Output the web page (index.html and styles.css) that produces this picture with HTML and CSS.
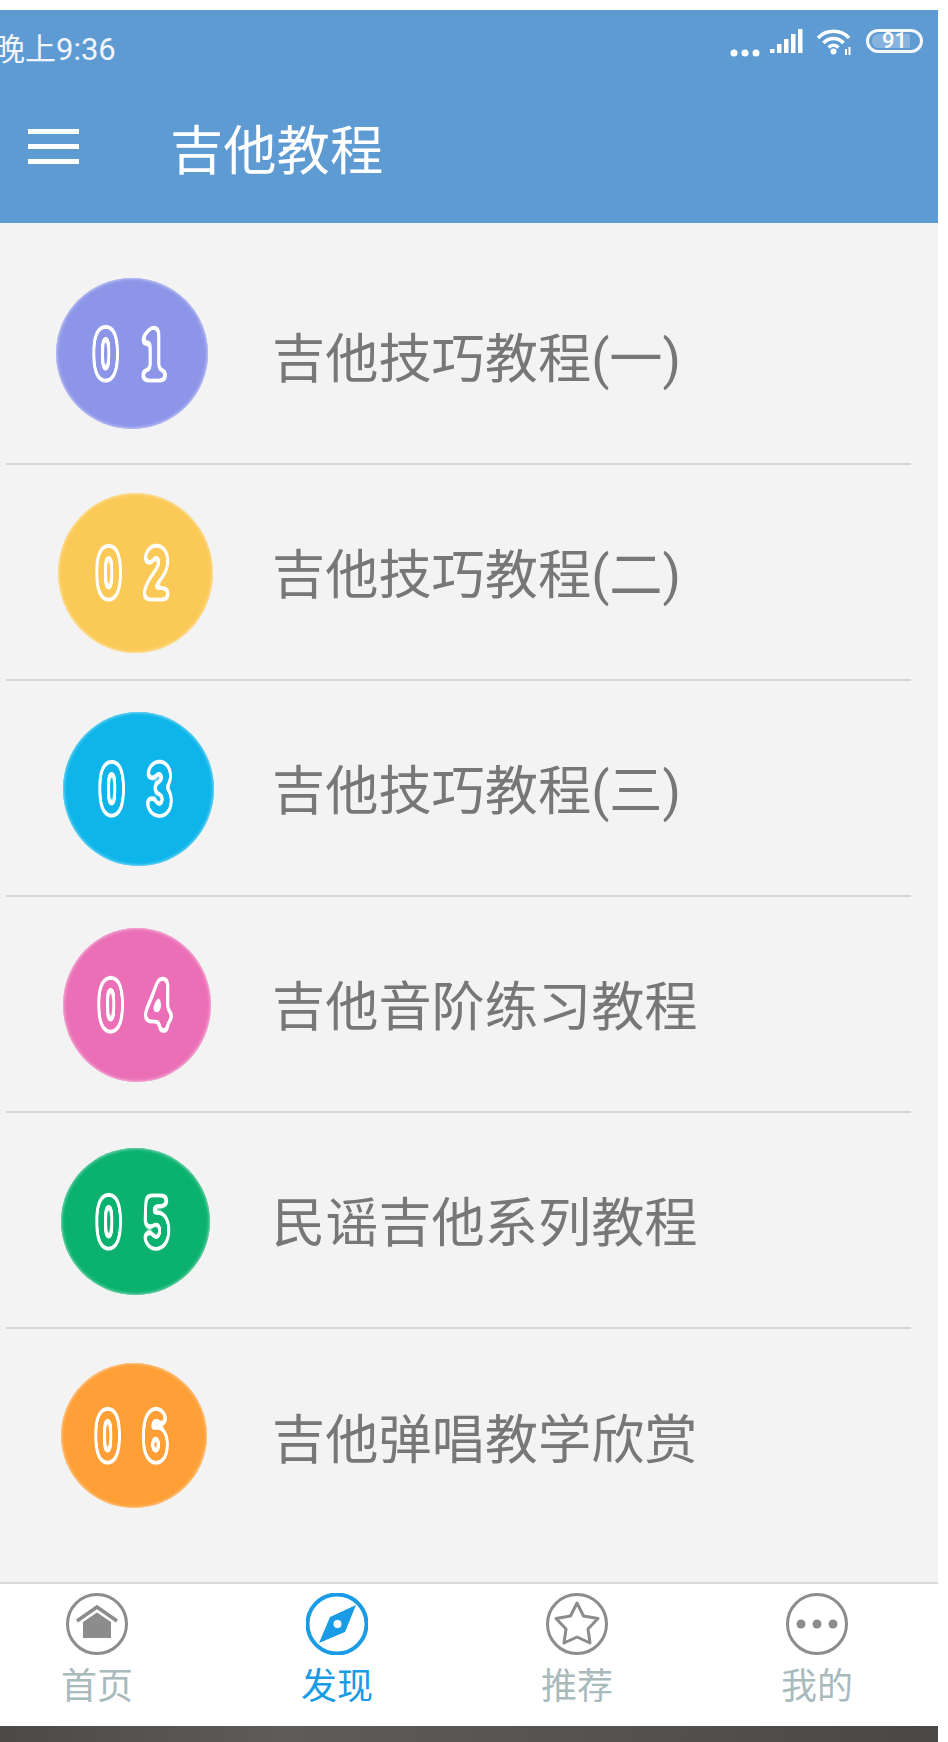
FILE: index.html
```html
<!DOCTYPE html>
<html lang="zh-CN">
<head>
<meta charset="utf-8">
<title>吉他教程</title>
<link rel="stylesheet" href="styles.css">
</head>
<body>
<svg class="defs" width="0" height="0" aria-hidden="true">
  <filter id="bubble" x="-25%" y="-25%" width="150%" height="150%" color-interpolation-filters="sRGB">
    <feGaussianBlur in="SourceGraphic" stdDeviation="4.500 3" result="b"/>
    <feComponentTransfer in="b" result="outer"><feFuncA type="linear" slope="12" intercept="-1.2"/></feComponentTransfer>
    <feComponentTransfer in="b" result="inner"><feFuncA type="linear" slope="12" intercept="-6"/></feComponentTransfer>
    <feComposite in="outer" in2="inner" operator="out" result="ring"/>
    <feGaussianBlur in="ring" stdDeviation="0.5"/>
  </filter>
</svg>
<div class="phone">
  <header class="header">
    <div class="status">
      <span class="clock">晚上9:36</span>
      <div class="status-icons">
        <svg class="ic-dots" viewBox="0 0 30 8"><circle cx="4" cy="4" r="3.500"/><circle cx="15" cy="4" r="3.500"/><circle cx="26" cy="4" r="3.500"/></svg>
        <svg class="ic-signal" viewBox="0 0 33 24"><rect x="0" y="20" width="4.500" height="4"/><rect x="7" y="15" width="4.500" height="9"/><rect x="14" y="10" width="4.500" height="14"/><rect x="21" y="5" width="4.500" height="19"/><rect x="28" y="0" width="4.500" height="24"/></svg>
        <svg class="ic-wifi" viewBox="0 0 35 26"><path class="wave" d="M1 9 C9 0 24 0 32 9"/><path class="wave" d="M6.500 14 C12 8 21 8 26.500 14"/><path class="wave" d="M11.500 18.500 C14.500 15.500 18.500 15.500 21.500 18.500"/><circle cx="16.500" cy="22.500" r="3"/><rect x="28" y="20" width="2" height="6"/><rect x="31.500" y="18" width="2" height="8"/></svg>
        <div class="battery"><span class="battery-fill"></span><span class="battery-num">91</span></div>
      </div>
    </div>
    <div class="toolbar">
      <div class="menu"><i></i><i></i><i></i></div>
      <h1 class="title">吉他教程</h1>
    </div>
  </header>

  <main class="list">
    <div class="row"><div class="slot"><div class="badge b1"><span class="num">01</span></div></div><span class="label">吉他技巧教程(一)</span></div>
    <div class="row"><div class="slot"><div class="badge b2"><span class="num">02</span></div></div><span class="label">吉他技巧教程(二)</span></div>
    <div class="row"><div class="slot"><div class="badge b3"><span class="num">03</span></div></div><span class="label">吉他技巧教程(三)</span></div>
    <div class="row"><div class="slot"><div class="badge b4"><span class="num">04</span></div></div><span class="label">吉他音阶练习教程</span></div>
    <div class="row"><div class="slot"><div class="badge b5"><span class="num">05</span></div></div><span class="label">民谣吉他系列教程</span></div>
    <div class="row last"><div class="slot"><div class="badge b6"><span class="num">06</span></div></div><span class="label">吉他弹唱教学欣赏</span></div>
  </main>

  <nav class="tabs">
    <div class="tab">
      <svg class="tab-icon" viewBox="0 0 62 62"><circle class="ring" cx="31" cy="31" r="29.500"/><path class="roof" d="M11 28 L31 14 L51 28"/><path class="fill" d="M17 29 L31 19.500 L45 29 V45 H17 Z"/></svg>
      <span class="tab-text">首页</span>
    </div>
    <div class="tab active">
      <svg class="tab-icon" viewBox="0 0 62 62"><circle class="ring" cx="31" cy="31" r="29.500"/><path class="fill" d="M50 12 L39 39 L13 50 L24 24 Z"/><circle class="hole" cx="31.500" cy="31" r="4"/></svg>
      <span class="tab-text">发现</span>
    </div>
    <div class="tab">
      <svg class="tab-icon" viewBox="0 0 62 62"><circle class="ring" cx="31" cy="31" r="29.500"/><path class="outline" d="M31 10 L37.500 23 L52 25.500 L42 36 L44 50 L31 44 L18 50 L20 36 L10 25.500 L24.500 23 Z"/></svg>
      <span class="tab-text">推荐</span>
    </div>
    <div class="tab">
      <svg class="tab-icon" viewBox="0 0 62 62"><circle class="ring" cx="31" cy="31" r="29.500"/><circle class="fill" cx="15" cy="31" r="4.500"/><circle class="fill" cx="31" cy="31" r="4.500"/><circle class="fill" cx="47" cy="31" r="4.500"/></svg>
      <span class="tab-text">我的</span>
    </div>
  </nav>
  <div class="strip"></div>
</div>
</body>
</html>
```

FILE: styles.css
```css
* { box-sizing: border-box; }
html, body { margin: 0; height: 100%; background: #fff; overflow: hidden; }
body { font-family: Roboto, "Noto Sans CJK SC", sans-serif; }
.defs { position: absolute; }

.phone {
  width: 938px;
  height: 1742px;
  padding-top: 10px;
  display: flex;
  flex-direction: column;
  overflow: hidden;
}

.header { height: 213px; background: #5f9bd3; color: #fff; flex: none; }
.status {
  height: 72px;
  display: flex;
  align-items: center;
  justify-content: space-between;
  padding-right: 15px;
}
.clock { font-size: 31px; margin-left: -6px; color: #f2f6fb; }
.status-icons { display: flex; align-items: center; margin-top: -10px; }
.status-icons svg { fill: #fff; display: block; }
.ic-dots { width: 30px; height: 8px; margin-top: 24px; }
.ic-signal { width: 33px; height: 24px; margin-left: 10px; }
.ic-wifi { width: 35px; height: 26px; margin-left: 14px; margin-top: 2px; }
.wave { fill: none; stroke: #fff; stroke-width: 3.500; }
.battery {
  position: relative;
  width: 57px;
  height: 24px;
  margin-left: 14px;
  border: 3px solid #f4f8fc;
  border-radius: 12px;
  display: flex;
  align-items: center;
  justify-content: center;
  overflow: hidden;
}
.battery-fill {
  position: absolute;
  left: 3px;
  top: 2px;
  bottom: 2px;
  width: 38px;
  border-radius: 6px 0 0 6px;
  background: rgba(255, 255, 255, .25);
}
.battery-num { position: relative; font-size: 22px; line-height: 18px; font-weight: 500; }

.toolbar { height: 136px; display: flex; align-items: center; padding: 0 0 7px 28px; }
.menu { width: 51px; display: flex; flex-direction: column; gap: 10px; }
.menu i { display: block; height: 5px; background: #fff; }
.title { margin: 11px 0 0 91px; font-size: 53.300px; line-height: 60px; font-weight: 400; }

.list { flex: 1; background: #f3f3f3; padding-top: 26px; }
.row {
  height: 216px;
  margin: 0 27px 0 6px;
  padding-top: 8px;
  border-bottom: 2px solid #d6d6d6;
  display: flex;
  align-items: center;
}
.row.last { border-bottom: 0; }
.slot { width: 266px; align-self: flex-start; flex: none; }
.label { font-size: 53.200px; line-height: 64px; color: #777; white-space: nowrap; }

.badge {
  border-radius: 50%;
  display: flex;
  align-items: center;
  justify-content: center;
  filter: blur(.7px);
}
.b1 { width: 152px; height: 151px; margin: 21px 0 0 50px; background: #8c95e8; box-shadow: inset 0 0 3px 1px #c3c8f4; }
.b2 { width: 155px; height: 160px; margin: 20px 0 0 52px; background: #fbc956; box-shadow: inset 0 0 3px 1px #fde3a6; }
.b3 { width: 151px; height: 154px; margin: 23px 0 0 57px; background: #0db5ea; box-shadow: inset 0 0 3px 1px #7cd6f3; }
.b4 { width: 148px; height: 154px; margin: 23px 0 0 57px; background: #ea6fb6; box-shadow: inset 0 0 3px 1px #f4b5da; }
.b5 { width: 149px; height: 147px; margin: 27px 0 0 55px; background: #0bb26f; box-shadow: inset 0 0 3px 1px #7ed5b0; }
.b6 { width: 146px; height: 145px; margin: 26px 0 0 55px; background: #ff9f35; box-shadow: inset 0 0 3px 1px #fdcb94; }
.num {
  display: inline-block;
  flex: none;
  font-family: "Liberation Sans", sans-serif;
  font-weight: 700;
  font-size: 72px;
  line-height: 90px;
  padding: 0 10px;
  letter-spacing: 37px;
  margin: 0 -10px 0 8px;
  color: #fff;
  filter: url(#bubble);
  transform: scaleX(.62);
}

.tabs {
  height: 144px;
  flex: none;
  background: #fff;
  border-top: 2px solid #d9d9d9;
  padding: 9px 0 0 27px;
  display: flex;
  gap: 100px;
}
.tab { width: 140px; display: flex; flex-direction: column; align-items: center; }
.tab-icon { width: 62px; height: 62px; display: block; }
.tab-text { margin-top: 12px; font-size: 36px; line-height: 40px; color: #a9babd; }
.ring { fill: none; stroke: #8c8c8c; stroke-width: 3; }
.roof { fill: none; stroke: #8c8c8c; stroke-width: 3.500; }
.fill { fill: #8c8c8c; }
.outline { fill: none; stroke: #8c8c8c; stroke-width: 3; stroke-linejoin: round; }
.hole { fill: #fff; }
.active .tab-text { color: #1a9be6; }
.active .ring { stroke: #1a9be6; stroke-width: 4; }
.active .fill { fill: #1a9be6; }

.strip {
  height: 16px;
  flex: none;
  background: linear-gradient(90deg, #4c4a48, #5e5b59 30%, #565351 60%, #4a4846);
}
```
